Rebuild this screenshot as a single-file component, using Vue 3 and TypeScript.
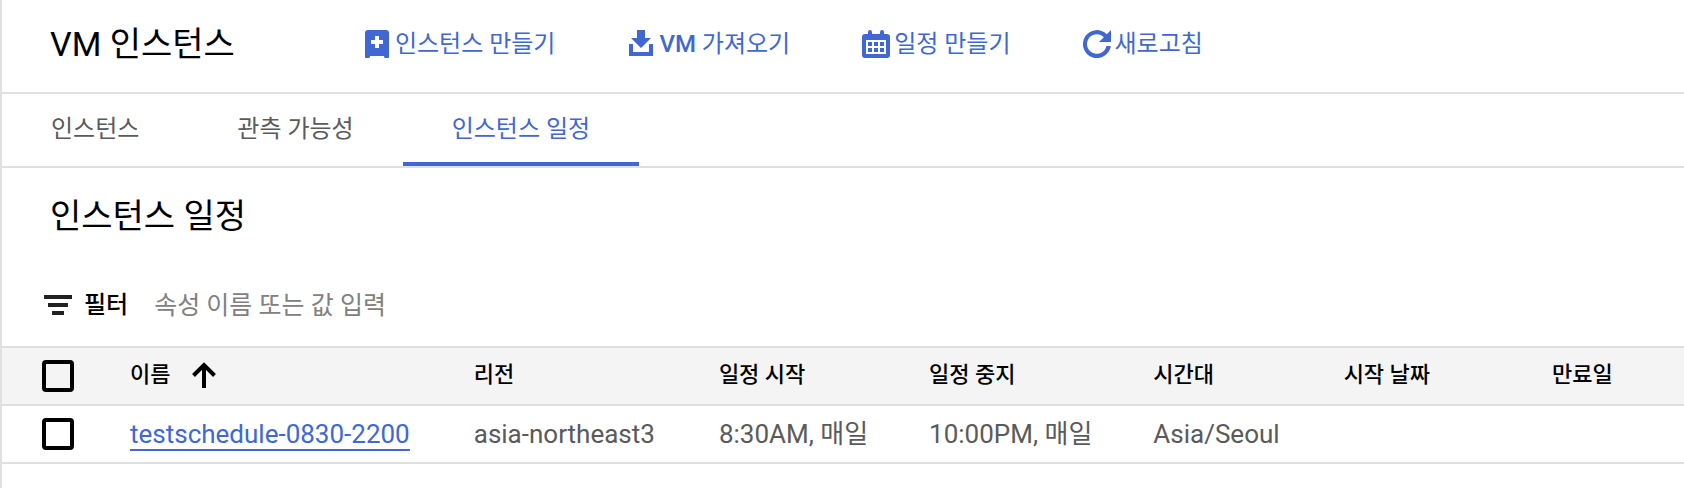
<script setup lang="ts">
import { ref } from 'vue'

interface Action { id: string; latin?: string; label: string }
interface Schedule { name: string; region: string; start: string; stop: string; zone: string; startDate: string; expiry: string }

const actions: Action[] = [
  { id: 'create', label: '인스턴스 만들기' },
  { id: 'import', latin: 'VM', label: ' 가져오기' },
  { id: 'schedule', label: '일정 만들기' },
  { id: 'refresh', label: '새로고침' },
]
const tabs: string[] = ['인스턴스', '관측 가능성', '인스턴스 일정']
const activeTab = ref<number>(2)
const filterText = ref<string>('')
const selected = ref<string[]>([])
const schedules: Schedule[] = [
  { name: 'testschedule-0830-2200', region: 'asia-northeast3', start: '8:30AM, 매일', stop: '10:00PM, 매일', zone: 'Asia/Seoul', startDate: '', expiry: '' },
]

function toggleAll(event: Event): void {
  const checked = (event.target as HTMLInputElement).checked
  selected.value = checked ? schedules.map((s) => s.name) : []
}
</script>

<template>
  <main class="page" lang="ko">
    <header class="topbar">
      <h1 class="title">VM 인스턴스</h1>
      <div class="actions">
        <button v-for="action in actions" :key="action.id" type="button" class="action">
          <svg class="icon" viewBox="0 0 28 28" aria-hidden="true">
            <path v-if="action.id === 'create'" fill-rule="evenodd" d="M5 0H23Q26 0 26 3V27Q26 28 25 28H22Q21 28 21 26H7Q7 28 6 28H3Q2 28 2 27V3Q2 0 5 0ZM12 6V10H8V14H12V18H16V14H20V10H16V6Z" />
            <path v-else-if="action.id === 'import'" d="M10 0H18V8H24L14 18L4 8H10ZM2 14H6V22H22V14H26V26H2Z" />
            <path v-else-if="action.id === 'schedule'" fill-rule="evenodd" d="M6 4V2Q6 0 8 0T10 2V4H18V2Q18 0 20 0T22 2V4H25Q28 4 28 7V25Q28 28 25 28H3Q0 28 0 25V7Q0 4 3 4ZM4 10V24H24V10ZM6 12H10V16H6ZM12 12H16V16H12ZM18 12H22V16H18ZM6 18H10V22H6ZM12 18H16V22H12ZM18 18H22V22H18Z" />
            <path v-else d="M28 0V12H16L20.800 7.200A9.800 9.800 0 1 0 23.400 16H27.800A14 14 0 1 1 23.800 4.200Z" />
          </svg>
          <span><b v-if="action.latin" class="latin">{{ action.latin }}</b>{{ action.label }}</span>
        </button>
      </div>
    </header>

    <div class="tabs" role="tablist">
      <button
        v-for="(tab, i) in tabs"
        :key="tab"
        type="button"
        role="tab"
        class="tab"
        :class="{ active: i === activeTab }"
        :aria-selected="i === activeTab"
        @click="activeTab = i"
      >{{ tab }}</button>
    </div>

    <h2 class="section-title">인스턴스 일정</h2>

    <div class="filter">
      <svg class="icon filter-icon" viewBox="0 0 28 28" aria-hidden="true">
        <path d="M0 4H28V8H0ZM4 12H24V16H4ZM8 20H20V24H8Z" />
      </svg>
      <label for="filter-input" class="filter-label">필터</label>
      <input id="filter-input" v-model="filterText" type="text" class="filter-input" placeholder="속성 이름 또는 값 입력" />
    </div>

    <table class="grid">
      <thead>
        <tr>
          <th class="check" scope="col">
            <input type="checkbox" class="box" aria-label="모두 선택" :checked="selected.length === schedules.length" @change="toggleAll" />
          </th>
          <th scope="col">
            <span class="sortable"><span>이름</span>
              <svg class="icon" viewBox="0 0 28 28" aria-hidden="true">
                <path d="M14 27V4M3.500 14.500L14 4L24.500 14.500" fill="none" stroke="currentColor" stroke-width="4" />
              </svg>
            </span>
          </th>
          <th scope="col">리전</th>
          <th scope="col">일정 시작</th>
          <th scope="col">일정 중지</th>
          <th scope="col">시간대</th>
          <th scope="col" class="start-date">시작 날짜</th>
          <th scope="col" class="last">만료일</th>
        </tr>
      </thead>
      <tbody>
        <tr v-for="s in schedules" :key="s.name">
          <td class="check"><input v-model="selected" type="checkbox" class="box" :value="s.name" :aria-label="s.name" /></td>
          <td><a href="#" class="link">{{ s.name }}</a></td>
          <td>{{ s.region }}</td>
          <td class="time">{{ s.start }}</td>
          <td class="time">{{ s.stop }}</td>
          <td>{{ s.zone }}</td>
          <td>{{ s.startDate }}</td>
          <td>{{ s.expiry }}</td>
        </tr>
      </tbody>
    </table>
  </main>
</template>

<style>
body {
  background: #fff;
}
</style>

<style scoped>
.page {
  box-sizing: border-box;
  min-height: 100vh;
  border-left: 2px solid #e0e0e0;
  color: #000;
  font-family: Roboto, "Noto Sans CJK KR", sans-serif;
  font-size: 24px;
}
button,
input {
  font: inherit;
}
.icon {
  width: 28px;
  height: 28px;
  flex: none;
  fill: currentColor;
}
.topbar {
  display: flex;
  align-items: center;
  gap: 128px;
  height: 92px;
  padding: 0 48px;
  border-bottom: 2px solid #e0e0e0;
}
.title,
.section-title {
  margin: 0;
  font-size: 34px;
  font-weight: 400;
  line-height: 48px;
  white-space: nowrap;
}
.topbar > * {
  margin-bottom: 4px;
}
.actions {
  display: flex;
  gap: 72px;
}
.action {
  display: flex;
  align-items: center;
  gap: 4px;
  padding: 0;
  border: 0;
  background: none;
  color: #4067d2;
  line-height: 36px;
  white-space: nowrap;
}
.latin {
  font-weight: 500;
}
.tabs {
  display: flex;
  border-bottom: 2px solid #e0e0e0;
}
.tab {
  height: 72px;
  padding: 2px 49px 0;
  border: 0;
  border-bottom: 4px solid transparent;
  background: none;
  color: #5a5a5a;
  line-height: 32px;
  white-space: nowrap;
}
.tab.active {
  border-bottom-color: #4067d2;
  color: #4067d2;
}
.section-title {
  padding: 24px 48px;
}
.filter {
  display: flex;
  align-items: center;
  height: 82px;
  padding: 0 42px;
}
.filter-icon {
  color: #212121;
}
.filter-label {
  margin: 0 26px 0 12px;
  font-weight: 500;
  line-height: 32px;
}
.filter-input {
  flex: 1;
  min-width: 0;
  padding: 0;
  border: 0;
  outline: 0;
  background: none;
  font-size: 25px;
}
.filter-input::placeholder {
  color: #808080;
  opacity: 1;
}
.grid {
  width: 100%;
  border-collapse: separate;
  border-spacing: 0;
}
th,
td {
  height: 56px;
  padding: 0 64px 0 0;
  border-bottom: 2px solid #e0e0e0;
  line-height: 32px;
  text-align: left;
  white-space: nowrap;
}
th {
  height: 54px;
  padding-bottom: 2px;
  border-top: 2px solid #e0e0e0;
  background: #f4f4f4;
  font-size: 22px;
  font-weight: 500;
}
tbody td {
  color: #5a5a5a;
  font-size: 26px;
}
td.time {
  padding-right: 61px;
}
th.check,
td.check {
  padding: 0 56px 0 40px;
}
th.check {
  height: 56px;
}
th.start-date {
  padding-right: 122px;
}
.last {
  width: 100%;
}
.box {
  display: block;
  appearance: none;
  box-sizing: border-box;
  width: 32px;
  height: 32px;
  margin: 0;
  border: 4px solid #000;
  border-radius: 4px;
}
.box:checked {
  background: #4067d2;
}
.sortable {
  display: flex;
  align-items: center;
  gap: 20px;
}
.link {
  border-bottom: 2px solid #4067d2;
  color: #4067d2;
  line-height: 28px;
  text-decoration: none;
}
</style>
